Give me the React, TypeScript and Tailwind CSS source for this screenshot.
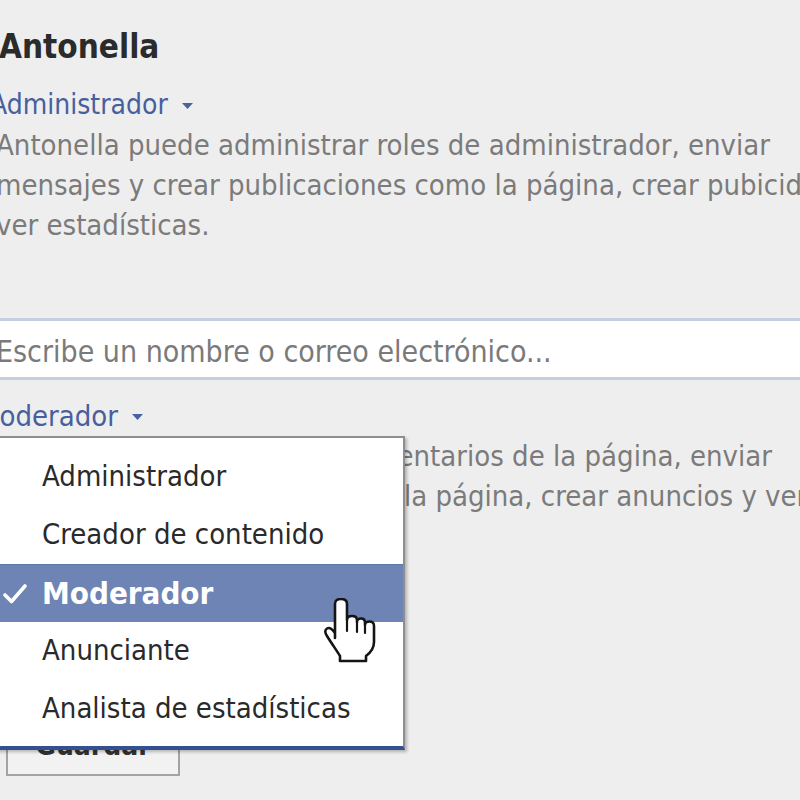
import React from "react";

function Caret() {
  return (
    <svg width="11" height="6" viewBox="0 0 11 6" className="ml-[14px] mt-[2px]">
      <path d="M0 0 H11 L5.5 6 Z" fill="#4a62a0" />
    </svg>
  );
}

function Check() {
  return (
    <svg width="24" height="20" viewBox="0 0 24 20" className="ml-[13px]">
      <path d="M2 11 L8.5 17.5 L22 2" fill="none" stroke="#ffffff" strokeWidth="3.6" strokeLinecap="round" strokeLinejoin="round" />
    </svg>
  );
}

function Hand() {
  return (
    <svg width="56" height="66" viewBox="0 0 56 66">
      <path
        d="M13 40 L13 6 C13 2.5 15 1 19 1 C23 1 25 2.5 25 6 L25 22 C25 19.5 27 18 30 18 C33 18 35 19.5 35 22 L35 24 C35 22 37 20.5 39 20.5 C41.5 20.5 43 22 43 24.5 L43 27 C43 25 45 23.5 47.5 23.5 C50 23.5 52 25 52 28 L52 44 C52 50 48 55 44 58 L44 63 L18 63 L18 58 C15 53 10 46 5 38 C3 35 2.5 32 5 30.5 C7.5 29 10 31 13 35 Z"
        fill="#ffffff"
        stroke="#151515"
        strokeWidth="2.6"
        strokeLinejoin="round"
      />
      <path d="M25 22 V33 M35 24 V34 M43 27 V35" stroke="#151515" strokeWidth="2.2" strokeLinecap="round" fill="none" />
    </svg>
  );
}

const items = [
  "Administrador",
  "Creador de contenido",
  "Moderador",
  "Anunciante",
  "Analista de estadísticas",
];

export default function App() {
  return (
    <div className="relative w-[800px] h-[800px] overflow-hidden bg-[#eeeeee] font-['DejaVu_Sans_Condensed','DejaVu_Sans',sans-serif] [font-stretch:condensed]">
      <div className="flex flex-col pt-[27px]">
        <div className="ml-[-1px] text-[33px] leading-[40px] font-bold text-[#2b2b2b] whitespace-nowrap">
          Antonella
        </div>
        <div className="mt-[18px] ml-[-10px] flex items-center text-[28px] leading-[40px] text-[#475f9d] whitespace-nowrap">
          <span>Administrador</span>
          <Caret />
        </div>
        <div className="ml-[-4px] text-[29px] leading-[40px] text-[#7b7b7b] whitespace-nowrap">
          <div>Antonella puede administrar roles de administrador, enviar</div>
          <div>mensajes y crear publicaciones como la página, crear pubicidad y</div>
          <div>ver estadísticas.</div>
        </div>
        <div className="mt-[73px] ml-[-10px] w-[830px] h-[62px] border-y-[3px] border-[#c6cfdd] bg-white flex items-center pl-[6px] pt-[4px] text-[30px] text-[#7a7a7a] whitespace-nowrap">
          Escribe un nombre o correo electrónico...
        </div>
        <div className="mt-[16px] ml-[-23px] flex items-center text-[29px] leading-[40px] text-[#475f9d] whitespace-nowrap">
          <span>Moderador</span>
          <Caret />
        </div>
        <div className="ml-[5px] text-[29px] leading-[40px] text-[#7b7b7b] whitespace-nowrap">
          <div>Antonella puede eliminar comentarios de la página, enviar</div>
          <div className="pl-[22px]">mensajes y responder como la página, crear anuncios y ver estadísticas.</div>
        </div>
        <div className="mt-[204px] ml-[6px] w-[174px] h-[56px] border-2 border-[#a3a3a3] bg-[#f2f2f2] flex items-start justify-center pt-[4px] text-[28px] leading-[40px] font-bold text-[#333333]">
          Guardar
        </div>
      </div>

      <div className="absolute left-[-12px] top-[436px] w-[417px] bg-white border-2 border-[#8e8e8e] border-b-[4px] border-b-[#34508f] shadow-[2px_2px_3px_rgba(0,0,0,0.25)] pt-[10px] pb-[8px]">
        {items.map((it) => {
          const sel = it === "Moderador";
          return (
            <div
              key={it}
              className={
                sel
                  ? "flex items-center h-[58px] bg-[#6d84b4] border-t border-[#5c74a8] text-white font-bold text-[31px] whitespace-nowrap"
                  : "flex items-center h-[58px] text-[#2a2a2a] text-[29px] whitespace-nowrap"
              }
            >
              <div className="w-[52px] flex items-center">{sel ? <Check /> : null}</div>
              <span>{it}</span>
            </div>
          );
        })}
      </div>

      <div className="absolute left-[322px] top-[598px]">
        <Hand />
      </div>
    </div>
  );
}
